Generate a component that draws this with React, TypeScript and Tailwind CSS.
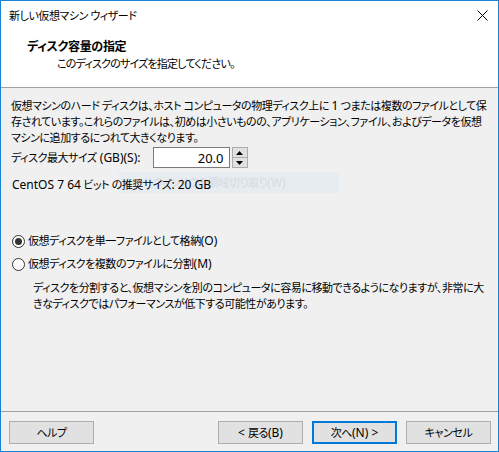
import React from "react";

const jp = "font-['Noto_Sans','Noto_Sans_CJK_JP',sans-serif] [font-feature-settings:'palt']";

// Latin runs keep the wider UI size while the Japanese text is condensed
function L({ children }: { children: React.ReactNode }) {
  return <span className="text-[12px] tracking-normal">{children}</span>;
}

function CloseIcon() {
  return (
    <svg width="11" height="11" viewBox="0 0 11 11" className="text-black">
      <path d="M0.5 0.5 L10.5 10.5 M10.5 0.5 L0.5 10.5" stroke="currentColor" strokeWidth="1" />
    </svg>
  );
}

function Radio({ checked }: { checked?: boolean }) {
  return (
    <span className="w-[13px] h-[13px] rounded-full border border-[#333] bg-white flex items-center justify-center shrink-0">
      {checked && <span className="w-[7px] h-[7px] rounded-full bg-[#333]" />}
    </span>
  );
}

function SpinBox({ value }: { value: string }) {
  return (
    <div className="flex items-stretch h-[21px]">
      <div className="w-[77px] border border-[#7a7a7a] bg-white flex items-center justify-end pr-[5px] text-[13px] tracking-normal">
        {value}
      </div>
      <div className="ml-[2px] w-[16px] flex flex-col border border-[#adadad] bg-[#e1e1e1]">
        <div className="flex-1 flex items-center justify-center border-b border-[#adadad]">
          <svg width="7" height="4" viewBox="0 0 7 4"><path d="M3.5 0 L7 4 L0 4 Z" fill="#000" /></svg>
        </div>
        <div className="flex-1 flex items-center justify-center">
          <svg width="7" height="4" viewBox="0 0 7 4"><path d="M0 0 L7 0 L3.5 4 Z" fill="#000" /></svg>
        </div>
      </div>
    </div>
  );
}

function Btn({ children, primary }: { children: React.ReactNode; primary?: boolean }) {
  return (
    <button
      className={
        "h-[23px] w-[85px] bg-[#e1e1e1] flex items-center justify-center " +
        (primary ? "border-2 border-[#0078d7]" : "border border-[#adadad]")
      }
    >
      {children}
    </button>
  );
}

export default function App() {
  return (
    <div className={`w-[499px] h-[452px] border border-[#1883d7] bg-[#f0f0f0] flex flex-col text-black text-[11px] tracking-[-0.45px] leading-[16px] ${jp}`}>
      {/* title bar */}
      <div className="h-[29px] bg-white flex items-center justify-between pl-[8px] pr-[10px]">
        <span>新しい仮想マシン ウィザード</span>
        <CloseIcon />
      </div>

      {/* page header */}
      <div className="h-[58px] bg-white border-b border-[#a0a0a0] pt-[8px]">
        <div className="pl-[26px] font-bold text-[12px] tracking-[-0.3px] leading-[18px]">ディスク容量の指定</div>
        <div className="pl-[56px] tracking-[-0.8px]">このディスクのサイズを指定してください。</div>
      </div>

      {/* body */}
      <div className="relative flex-1 px-[10px] pt-[10px]">
        <p className="whitespace-nowrap">
          仮想マシンのハード ディスクは、ホスト コンピュータの物理ディスク上に <L>1</L> つまたは複数のファイルとして保
          <br />
          存されています。これらのファイルは、初めは小さいものの、アプリケーション、ファイル、およびデータを仮想
          <br />
          マシンに追加するにつれて大きくなります。
        </p>

        <div className="flex items-center mt-[1px]">
          <span className="mr-[12px]">
            ディスク最大サイズ<L>&nbsp;(GB)(S):</L>
          </span>
          <SpinBox value="20.0" />
        </div>

        <div className="absolute left-[118px] top-[84px] w-[220px] h-[21px] bg-[#e7ecf1] flex items-center pl-[34px] text-[#d5dbe2]">
          ウィンドウの領域切り取り<L>(W)</L>
        </div>
        <div className="relative mt-[9px] pl-[1px]">
          <L>CentOS 7 64</L> ビット の推奨サイズ<L>: 20 GB</L>
        </div>

        <div className="mt-[40px] flex items-center gap-[3px] pl-[1px] h-[16px]">
          <Radio checked />
          <span>
            仮想ディスクを単一ファイルとして格納<L>(O)</L>
          </span>
        </div>
        <div className="mt-[7px] flex items-center gap-[3px] pl-[1px] h-[16px]">
          <Radio />
          <span>
            仮想ディスクを複数のファイルに分割<L>(M)</L>
          </span>
        </div>
        <p className="mt-[8px] pl-[22px] whitespace-nowrap">
          ディスクを分割すると、仮想マシンを別のコンピュータに容易に移動できるようになりますが、非常に大
          <br />
          きなディスクではパフォーマンスが低下する可能性があります。
        </p>
      </div>

      {/* footer */}
      <div className="h-[40px] border-t border-[#a0a0a0] flex items-start pt-[9px] pl-[8px] pr-[7px]">
        <Btn>ヘルプ</Btn>
        <div className="ml-auto flex gap-[9px]">
          <Btn>
            <L>&lt;&nbsp;</L>戻る<L>(B)</L>
          </Btn>
          <Btn primary>
            次へ<L>(N)&nbsp;&gt;</L>
          </Btn>
          <Btn>キャンセル</Btn>
        </div>
      </div>
    </div>
  );
}
